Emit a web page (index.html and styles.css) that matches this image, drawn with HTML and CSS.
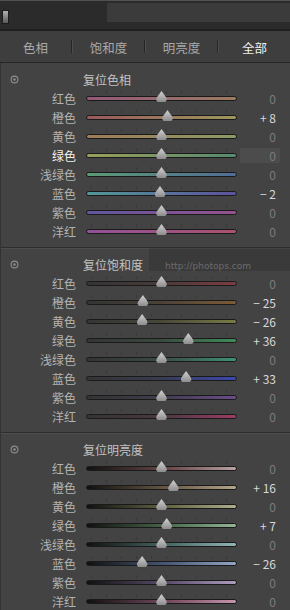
FILE: index.html
```html
<!DOCTYPE html>
<html>
<head>
  <meta charset="utf-8">
  <title>HSL</title>
  <link rel="stylesheet" href="styles.css">
</head>
<body>
  <div class="topbar">
    <div class="grip"></div>
    <div class="topfield"></div>
  </div>

  <div class="tabs">
    <div class="tab">色相</div>
    <div class="sep"></div>
    <div class="tab">饱和度</div>
    <div class="sep"></div>
    <div class="tab">明亮度</div>
    <div class="sep"></div>
    <div class="tab active">全部</div>
  </div>

  <div class="panel">
    <!-- 色相 -->
    <div class="section first">
      <div class="head">
        <svg class="reset" viewBox="0 0 9 9"><circle cx="4.5" cy="4.5" r="3.4" fill="none" stroke="#8e8e8e" stroke-width="1.1"/><circle cx="4.5" cy="4.5" r="1.2" fill="#8e8e8e"/></svg>
        <span class="title">复位色相</span>
      </div>
      <div class="row"><span class="label">红色</span><div class="track h-red"><div class="thumb" style="left:50%"></div></div><span class="val">0</span></div>
      <div class="row"><span class="label">橙色</span><div class="track h-orange"><div class="thumb" style="left:54%"></div></div><span class="val on">+ 8</span></div>
      <div class="row"><span class="label">黄色</span><div class="track h-yellow"><div class="thumb" style="left:50%"></div></div><span class="val">0</span></div>
      <div class="row"><span class="label lit">绿色</span><div class="track h-green"><div class="thumb" style="left:50%"></div></div><span class="val box">0</span></div>
      <div class="row"><span class="label">浅绿色</span><div class="track h-aqua"><div class="thumb" style="left:50%"></div></div><span class="val">0</span></div>
      <div class="row"><span class="label">蓝色</span><div class="track h-blue"><div class="thumb" style="left:49%"></div></div><span class="val on">− 2</span></div>
      <div class="row"><span class="label">紫色</span><div class="track h-purple"><div class="thumb" style="left:50%"></div></div><span class="val">0</span></div>
      <div class="row"><span class="label">洋红</span><div class="track h-magenta"><div class="thumb" style="left:50%"></div></div><span class="val">0</span></div>
    </div>

    <!-- 饱和度 -->
    <div class="section">
      <div class="head">
        <svg class="reset" viewBox="0 0 9 9"><circle cx="4.5" cy="4.5" r="3.4" fill="none" stroke="#8e8e8e" stroke-width="1.1"/><circle cx="4.5" cy="4.5" r="1.2" fill="#8e8e8e"/></svg>
        <span class="title">复位饱和度</span>
      </div>
      <div class="row"><span class="label">红色</span><div class="track s-red"><div class="thumb" style="left:50%"></div></div><span class="val">0</span></div>
      <div class="row"><span class="label">橙色</span><div class="track s-orange"><div class="thumb" style="left:37.5%"></div></div><span class="val on">− 25</span></div>
      <div class="row"><span class="label">黄色</span><div class="track s-yellow"><div class="thumb" style="left:37%"></div></div><span class="val on">− 26</span></div>
      <div class="row"><span class="label">绿色</span><div class="track s-green"><div class="thumb" style="left:68%"></div></div><span class="val on">+ 36</span></div>
      <div class="row"><span class="label">浅绿色</span><div class="track s-aqua"><div class="thumb" style="left:50%"></div></div><span class="val">0</span></div>
      <div class="row"><span class="label">蓝色</span><div class="track s-blue"><div class="thumb" style="left:66.5%"></div></div><span class="val on">+ 33</span></div>
      <div class="row"><span class="label">紫色</span><div class="track s-purple"><div class="thumb" style="left:50%"></div></div><span class="val">0</span></div>
      <div class="row"><span class="label">洋红</span><div class="track s-magenta"><div class="thumb" style="left:50%"></div></div><span class="val">0</span></div>
    </div>

    <!-- 明亮度 -->
    <div class="section">
      <div class="head">
        <svg class="reset" viewBox="0 0 9 9"><circle cx="4.5" cy="4.5" r="3.4" fill="none" stroke="#8e8e8e" stroke-width="1.1"/><circle cx="4.5" cy="4.5" r="1.2" fill="#8e8e8e"/></svg>
        <span class="title">复位明亮度</span>
      </div>
      <div class="row"><span class="label">红色</span><div class="track l-red"><div class="thumb" style="left:50%"></div></div><span class="val">0</span></div>
      <div class="row"><span class="label">橙色</span><div class="track l-orange"><div class="thumb" style="left:58%"></div></div><span class="val on">+ 16</span></div>
      <div class="row"><span class="label">黄色</span><div class="track l-yellow"><div class="thumb" style="left:50%"></div></div><span class="val">0</span></div>
      <div class="row"><span class="label">绿色</span><div class="track l-green"><div class="thumb" style="left:53.5%"></div></div><span class="val on">+ 7</span></div>
      <div class="row"><span class="label">浅绿色</span><div class="track l-aqua"><div class="thumb" style="left:50%"></div></div><span class="val">0</span></div>
      <div class="row"><span class="label">蓝色</span><div class="track l-blue"><div class="thumb" style="left:37%"></div></div><span class="val on">− 26</span></div>
      <div class="row"><span class="label">紫色</span><div class="track l-purple"><div class="thumb" style="left:50%"></div></div><span class="val">0</span></div>
      <div class="row"><span class="label">洋红</span><div class="track l-magenta"><div class="thumb" style="left:50%"></div></div><span class="val">0</span></div>
    </div>
  </div>

  <!-- watermark over the saturation header -->
  <div class="watermark">http://photops.com</div>
</body>
</html>
```

FILE: styles.css
```css
body {
  margin: 0;
  padding: 0;
  width: 290px;
  height: 610px;
  overflow: hidden;
  background-color: #434343;
  font-family: "Noto Sans CJK SC", "Noto Sans", sans-serif;
  position: relative;
}

.topbar {
  height: 28px;
  background-color: #2b2b2b;
  border-top: 1px solid #515151;
  display: flex;
  align-items: flex-start;
}

.grip {
  width: 5px;
  height: 12px;
  margin: 9px 0 0 2px;
  border: 1px solid #1c1c1c;
  background: linear-gradient(#b0b0b0, #5a5a5a);
}

.topfield {
  margin: 2px 0 0 auto;
  width: 183px;
  height: 19px;
  background-color: #3b3b3b;
}

.tabs {
  height: 31px;
  background-color: #3e3e3e;
  border-top: 2px solid #1f1f1f;
  border-bottom: 1px solid #262626;
  display: flex;
  align-items: center;
}

.tab {
  flex: 1;
  text-align: center;
  font-size: 12.5px;
  color: #a9a9a9;
  padding-top: 1px;
}

.tab.active {
  color: #f0f0f0;
}

.sep {
  width: 1px;
  height: 13px;
  background-color: #262626;
  border-right: 1px solid #4e4e4e;
}

.panel {
  border-left: 1px solid #333;
}

.section {
  padding: 6px 0;
  border-top: 1px solid #4e4e4e;
  border-bottom: 1px solid #2d2d2d;
}

.section.first {
  border-top: 1px solid #434343;
}

.head {
  height: 19px;
  display: flex;
  align-items: center;
}

.reset {
  width: 9px;
  height: 9px;
  margin-left: 9px;
}

.title {
  margin-left: 64px;
  font-size: 12px;
  color: #c2c2c2;
}

.row {
  height: 19px;
  display: flex;
  align-items: center;
}

.label {
  width: 75px;
  text-align: right;
  font-size: 12px;
  color: #b3b3b3;
}

.label.lit {
  color: #f2f2f2;
}

.track {
  position: relative;
  width: 151px;
  height: 5px;
  margin-left: 10px;
  box-sizing: border-box;
  border: 1px solid #1a1a1a;
  border-radius: 3px;
}

.track::before {
  content: "";
  position: absolute;
  left: 4px;
  right: 4px;
  top: -6px;
  height: 3px;
  background: repeating-linear-gradient(to right, rgba(0, 0, 0, 0.16) 0 1px, transparent 1px 15px);
}

.thumb {
  position: absolute;
  top: -6px;
  width: 11px;
  height: 11px;
  margin-left: -5.5px;
  background: linear-gradient(#d2d2d2, #8c8c8c);
  clip-path: polygon(50% 0, 90% 55%, 100% 80%, 85% 100%, 15% 100%, 0 80%, 10% 55%);
  z-index: 1;
}

.val {
  width: 40px;
  height: 15px;
  line-height: 15px;
  margin-left: 3px;
  padding-right: 4px;
  box-sizing: border-box;
  text-align: right;
  font-size: 12px;
  color: #7b7b7b;
}

.val.on {
  color: #d8d8d8;
}

.val.box {
  background-color: #4c4c4c;
}

/* hue */
.h-red { background: linear-gradient(to right, #94587a, #9c7a60); }
.h-orange { background: linear-gradient(to right, #9a585c, #9c985c); }
.h-yellow { background: linear-gradient(to right, #a07a58, #8c9c64); }
.h-green { background: linear-gradient(to right, #9a9e5a, #568a70); }
.h-aqua { background: linear-gradient(to right, #5c9a74, #506c96); }
.h-blue { background: linear-gradient(to right, #529898, #5c529c); }
.h-purple { background: linear-gradient(to right, #5e569c, #96528e); }
.h-magenta { background: linear-gradient(to right, #92529a, #a8526e); }

/* saturation */
.s-red { background: linear-gradient(to right, #343434, #4a3a3a 50%, #7c3c42); }
.s-orange { background: linear-gradient(to right, #343434, #4a4238 50%, #7c5a36); }
.s-yellow { background: linear-gradient(to right, #343434, #48483a 50%, #7a7a46); }
.s-green { background: linear-gradient(to right, #343434, #3a4a40 50%, #3e8c5a); }
.s-aqua { background: linear-gradient(to right, #343434, #3a4a46 50%, #3e9078); }
.s-blue { background: linear-gradient(to right, #343434, #383c52 50%, #3a48b0); }
.s-purple { background: linear-gradient(to right, #343434, #423c4c 50%, #6a4c8c); }
.s-magenta { background: linear-gradient(to right, #343434, #4a3842 50%, #9c3c64); }

/* luminance */
.l-red { background: linear-gradient(to right, #111, #6a4848 55%, #b8a2a2); }
.l-orange { background: linear-gradient(to right, #111, #6a5a44 55%, #b4a48c); }
.l-yellow { background: linear-gradient(to right, #111, #666644 55%, #aeae8c); }
.l-green { background: linear-gradient(to right, #111, #4a6a4c 55%, #94b494); }
.l-aqua { background: linear-gradient(to right, #111, #486a66 55%, #92b4b4); }
.l-blue { background: linear-gradient(to right, #111, #4a5a7a 55%, #94a4c4); }
.l-purple { background: linear-gradient(to right, #111, #5e4e6e 55%, #ac9cbc); }
.l-magenta { background: linear-gradient(to right, #111, #764a5e 55%, #c494ac); }

.watermark {
  position: absolute;
  top: 248px;
  left: 149px;
  width: 141px;
  height: 23px;
  box-sizing: border-box;
  padding: 13px 0 0 16px;
  background-color: rgba(0, 0, 0, 0.12);
  font-family: "DejaVu Sans", sans-serif;
  font-size: 9px;
  line-height: 10px;
  color: rgba(225, 225, 225, 0.3);
  white-space: nowrap;
}
```
